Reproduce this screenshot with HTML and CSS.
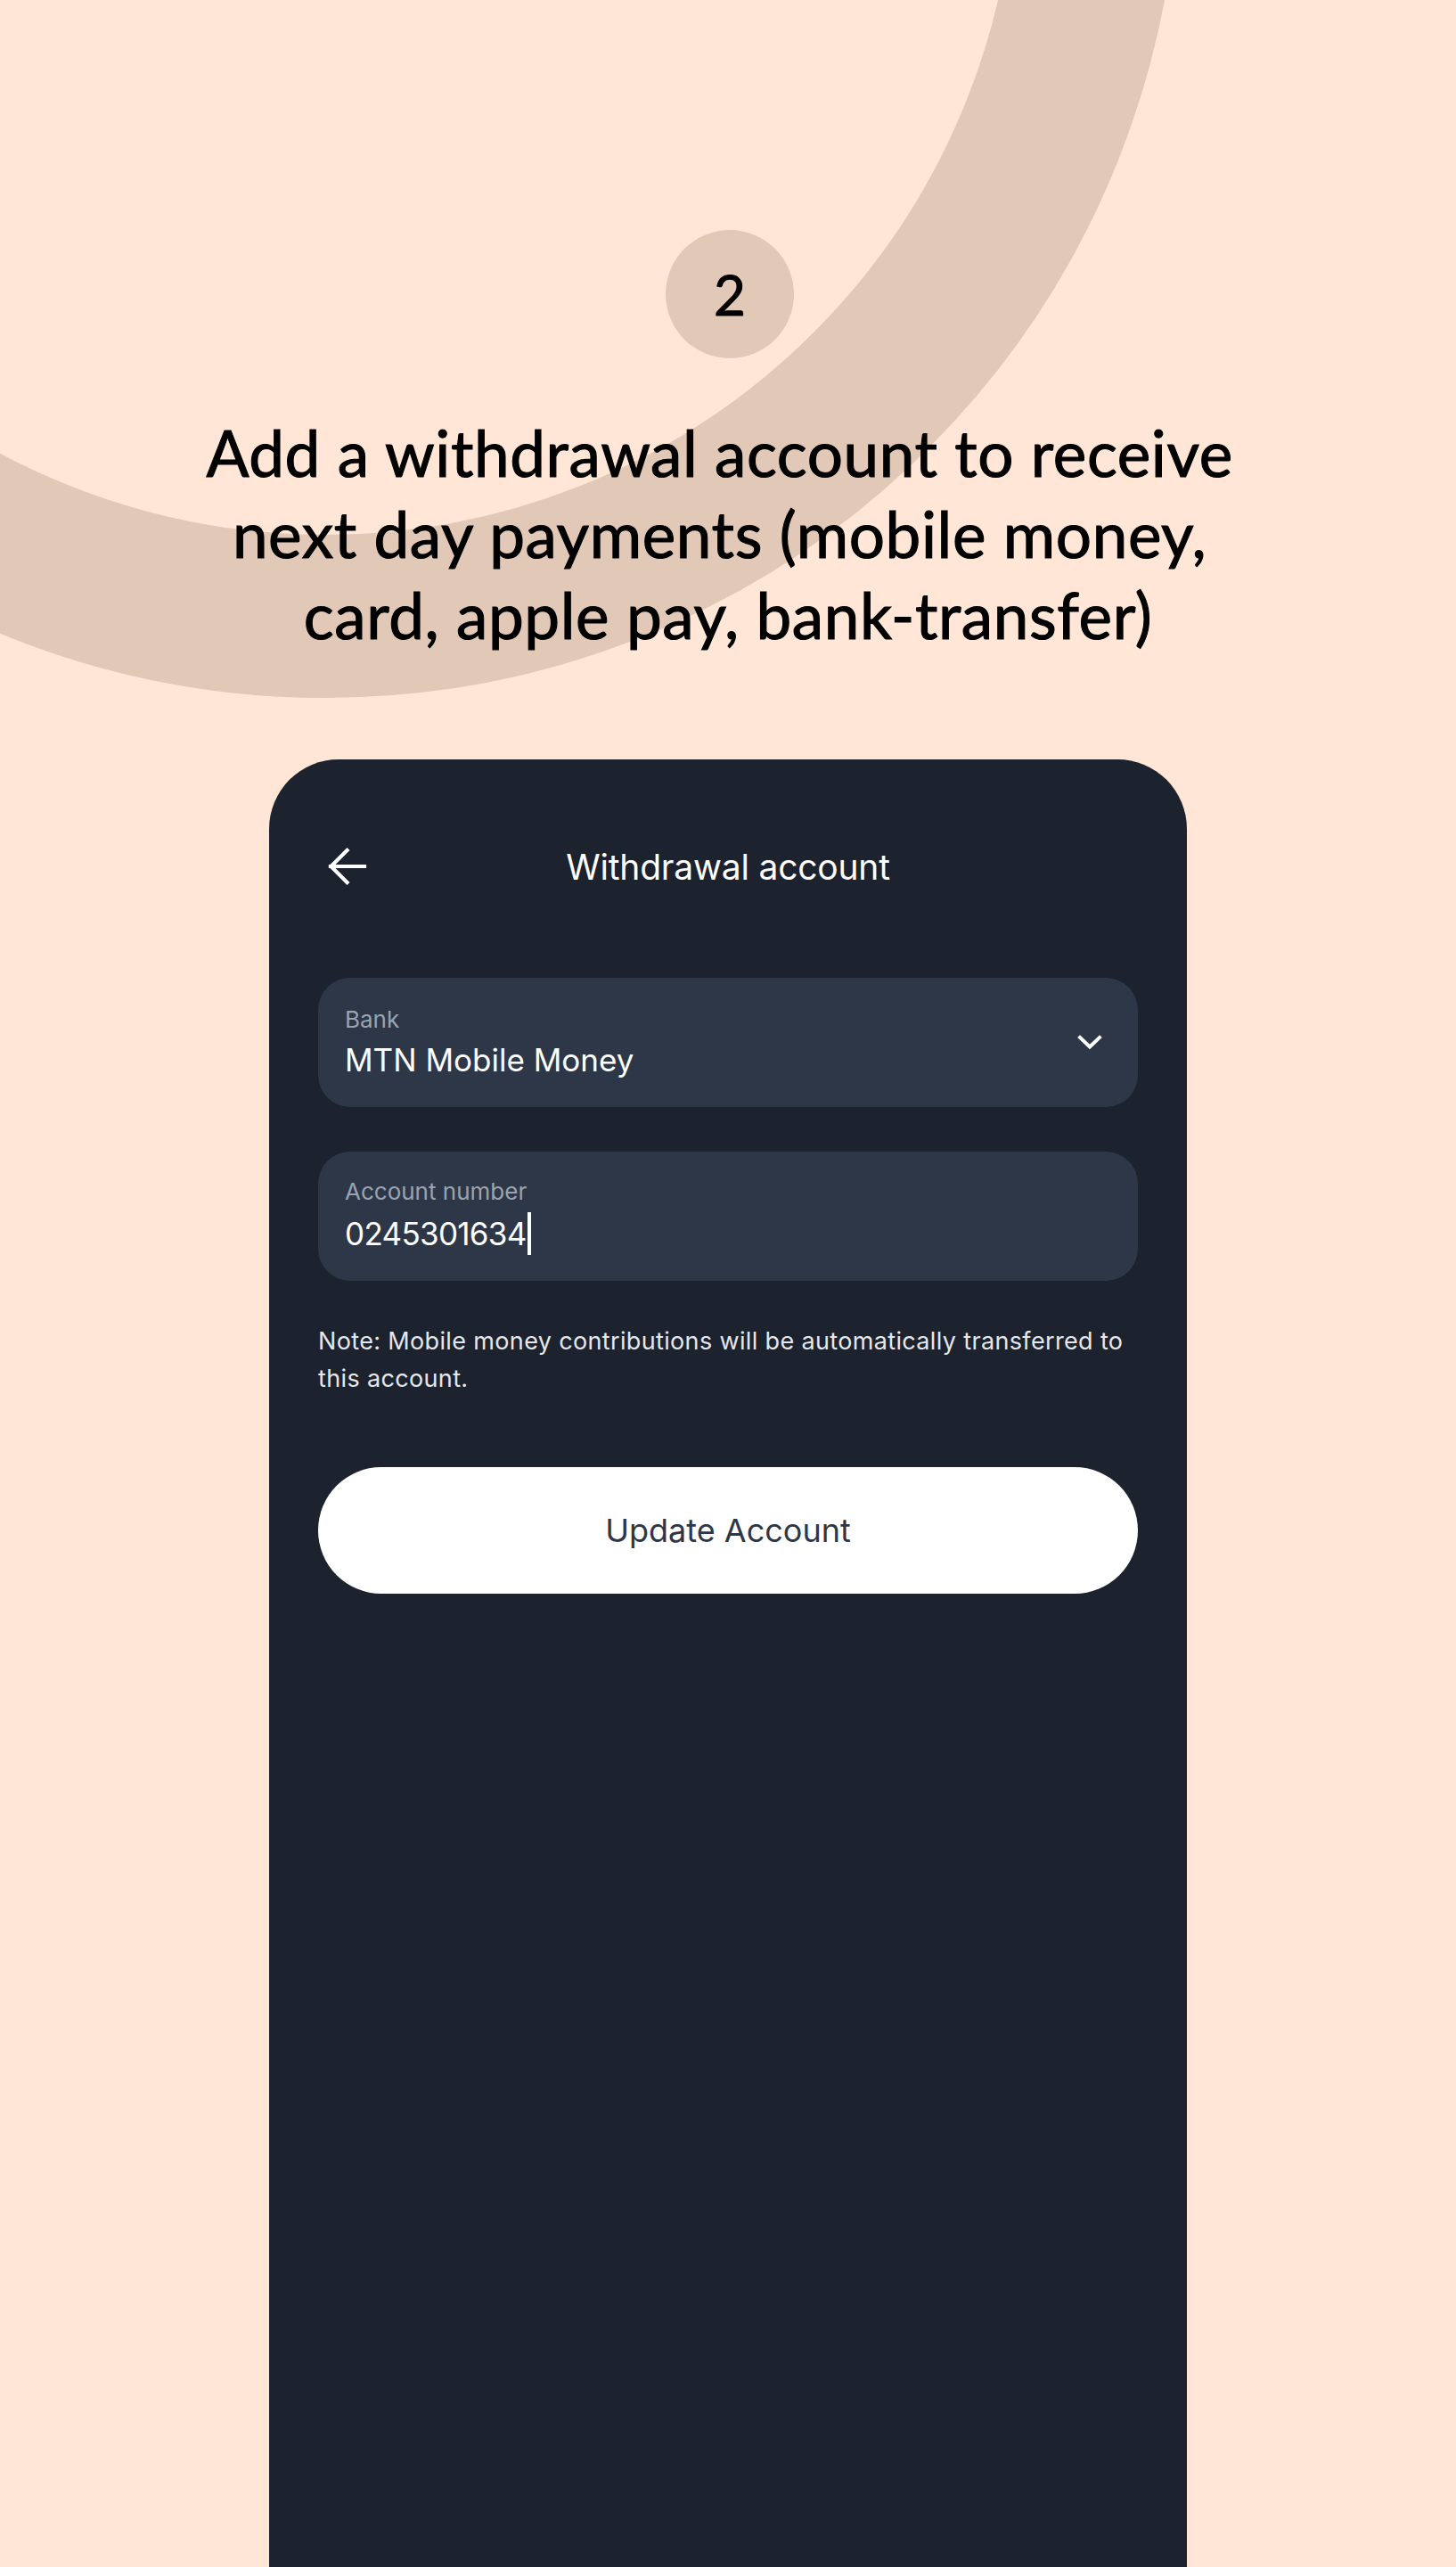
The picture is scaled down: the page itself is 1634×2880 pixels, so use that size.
FILE: index.html
```html
<!DOCTYPE html>
<html lang="en">
<head>
<meta charset="utf-8">
<title>Withdrawal account</title>
<link rel="stylesheet" href="styles.css">
</head>
<body>
<div class="page">
  <div class="ring" aria-hidden="true"></div>
  <main class="content">
    <div class="step">2</div>
    <h1 class="headline">Add a withdrawal account to receive&nbsp;<br>next day payments (mobile money,&nbsp;<br>card, apple pay, bank-transfer)</h1>
    <section class="phone">
      <header class="topbar">
        <button class="back" aria-label="Back">
          <svg width="46" height="46" viewBox="0 0 46 46" fill="none" stroke="#ffffff" stroke-width="4.2" stroke-linecap="square" stroke-linejoin="miter">
            <path d="M4 23 H42"/>
            <path d="M22.5 5 L4.5 23 L22.5 41"/>
          </svg>
        </button>
        <div class="title">Withdrawal account</div>
        <span></span>
      </header>
      <div class="field select">
        <div class="field-text">
          <div class="label">Bank</div>
          <div class="value">MTN Mobile Money</div>
        </div>
        <svg class="chev" width="28" height="18" viewBox="0 0 28 18" fill="none" stroke="#ffffff" stroke-width="4" stroke-linecap="square">
          <path d="M3 3 L14 13.5 L25 3"/>
        </svg>
      </div>
      <div class="field">
        <div class="field-text">
          <div class="label">Account number</div>
          <div class="value digits">0245301634<span class="caret"></span></div>
        </div>
      </div>
      <p class="note">Note: Mobile money contributions will be automatically transferred to this account.</p>
      <button class="primary">Update Account</button>
    </section>
  </main>
</div>
</body>
</html>
```

FILE: styles.css
```css
* { box-sizing: border-box; }
html, body {
  margin: 0;
  padding: 0;
  background: #ffe6d6;
}
.page {
  position: relative;
  width: 1634px;
  height: 2880px;
  overflow: hidden;
  background: #ffe6d6;
}
.ring {
  position: absolute;
  left: -593px;
  top: -1133px;
  width: 1916px;
  height: 1916px;
  border-radius: 50%;
  border: 183px solid #e2c8b7;
}
.content {
  position: relative;
  display: flex;
  flex-direction: column;
  align-items: center;
  padding-top: 258px;
}
.step {
  width: 144px;
  height: 144px;
  border-radius: 50%;
  background: #e2c8b7;
  display: flex;
  align-items: center;
  justify-content: center;
  font-family: "Lato", "Noto Sans", sans-serif;
  font-weight: 400;
  font-size: 62px;
  color: #000;
  -webkit-text-stroke: 1px #000;
  margin-left: 4px;
}
.headline {
  margin: 60px 0 0;
  font-family: "Lato", "Noto Sans", sans-serif;
  font-weight: 400;
  font-size: 71px;
  line-height: 91px;
  text-align: center;
  color: #000;
  letter-spacing: 0.6px;
  -webkit-text-stroke: 1.1px #000;
}
.phone {
  margin-top: 117px;
  width: 1030px;
  height: 2100px;
  background: #1c222e;
  border-radius: 78px 78px 0 0;
  padding: 80px 55px 0;
  display: flex;
  flex-direction: column;
  font-family: "Inter", "Noto Sans", sans-serif;
}
.topbar {
  display: grid;
  grid-template-columns: 1fr auto 1fr;
  align-items: center;
  height: 80px;
}
.back {
  background: none;
  border: 0;
  padding: 0;
  margin-left: 10px;
  width: 46px;
  height: 46px;
  display: flex;
}
.title {
  color: #ffffff;
  font-size: 39px;
  font-weight: 400;
  letter-spacing: -0.2px;
}
.field {
  margin-top: 85px;
  height: 145px;
  border-radius: 36px;
  background: #2d3748;
  padding: 0 30px;
  display: flex;
  align-items: center;
  justify-content: space-between;
}
.field + .field { margin-top: 50px; }
.field-text {
  display: flex;
  flex-direction: column;
  gap: 8px;
}
.label {
  font-size: 26px;
  line-height: 30px;
  color: #9aa3b0;
}
.value {
  font-size: 35px;
  line-height: 44px;
  color: #ffffff;
  display: flex;
  align-items: center;
}
.digits { letter-spacing: -0.7px; }
.caret {
  display: inline-block;
  width: 4px;
  height: 48px;
  background: #ffffff;
  margin-left: 1px;
}
.chev { margin-right: 10px; }
.note {
  margin: 47px 0 0;
  font-size: 27px;
  line-height: 42px;
  color: #e4e7ec;
  letter-spacing: 0.35px;
}
.primary {
  margin-top: 78px;
  height: 142px;
  border: 0;
  border-radius: 71px;
  background: #ffffff;
  color: #2d3748;
  font-family: "Inter", "Noto Sans", sans-serif;
  font-size: 36px;
  font-weight: 400;
}
```
